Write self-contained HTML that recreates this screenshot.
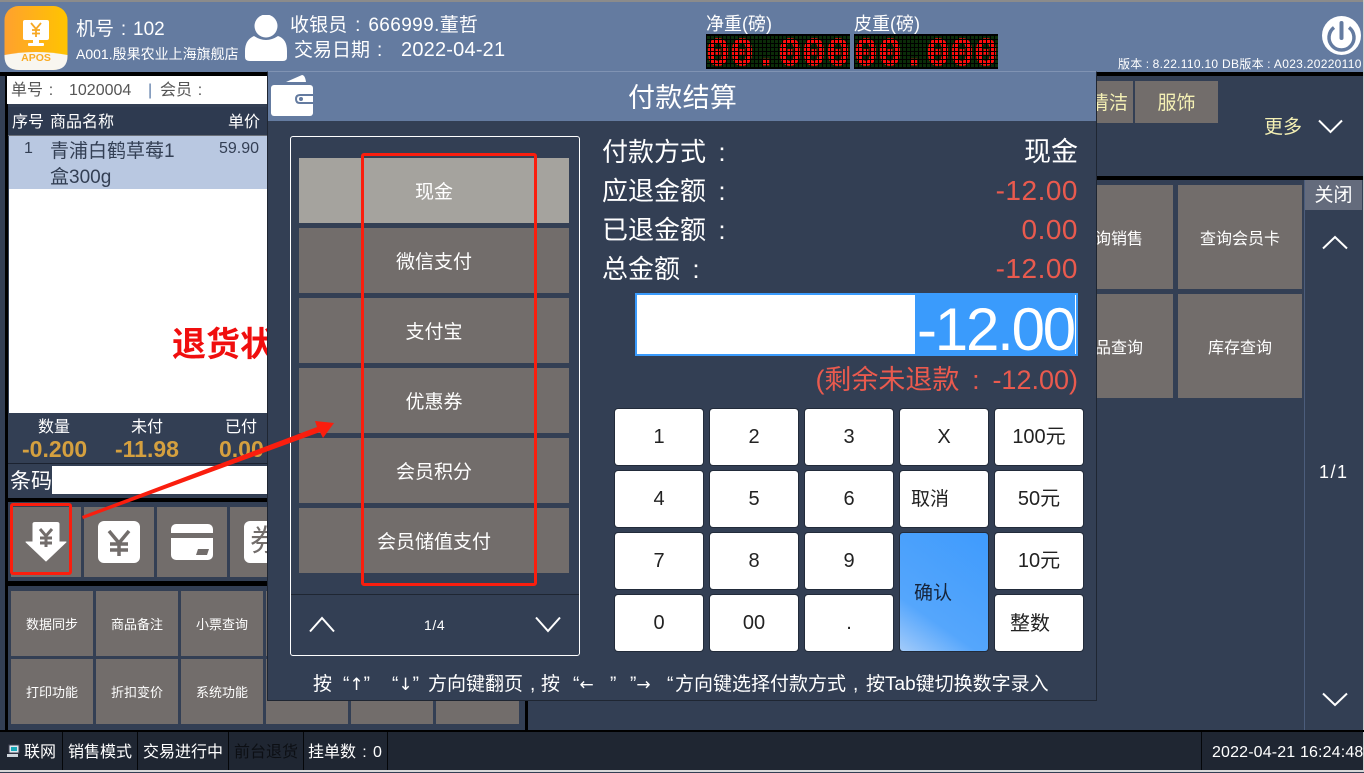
<!DOCTYPE html>
<html lang="zh"><head><meta charset="utf-8"><title>付款结算</title>
<style>
*{box-sizing:border-box}
html,body{margin:0;padding:0}
body{width:1364px;height:772px;position:relative;overflow:hidden;background:#333f54;font-family:"Liberation Sans","Noto Sans CJK SC",sans-serif;color:#fff}
.a{position:absolute}
.t{position:absolute;white-space:nowrap;line-height:1}
.b{position:absolute;display:flex;align-items:center;justify-content:center;background:#726d6b;color:#fff;white-space:nowrap;line-height:1}
.f{font-size:13px;padding-top:2px}
.p{font-size:19px;left:299px;width:270px;height:65px;padding-top:4px}
.q{font-size:16px;padding-top:5px}
.k{position:absolute;display:flex;align-items:center;justify-content:center;width:88px;height:56px;line-height:56px;background:#fff;color:#222;border-radius:3px;font-size:20px;white-space:nowrap;box-shadow:0 0 0 1px #222b3a}
.l{font-size:26px;left:602px;color:#fff}
.r{font-size:28px;right:286px;color:#ea5a4e;letter-spacing:.5px}
.s{position:absolute;top:732px;height:38px;line-height:41px;font-size:16px;white-space:nowrap}
.v{position:absolute;top:732px;width:1px;height:38px;background:#05070a}
.c{display:inline-block;text-align:center}
.h{position:absolute;top:675px;font-size:19px;line-height:1;white-space:nowrap}
.h i{font-style:normal;font-family:"DejaVu Sans",sans-serif;font-size:17px}
svg{position:absolute;display:block}
</style></head><body>
<!-- header -->
<div class="a" style="left:0;top:0;width:1364px;height:72px;background:#647ba0"></div>
<div class="a" style="left:0;top:0;width:1364px;height:2px;background:#8b8b8b"></div>
<div class="a" style="left:0;top:72px;width:1364px;height:4px;background:#000"></div>
<svg style="left:4px;top:6px" width="64" height="64" viewBox="0 0 64 64"><defs><linearGradient id="og" x1="0" x2="1"><stop offset="0" stop-color="#ffa12e"/><stop offset="1" stop-color="#ffc400"/></linearGradient></defs>
<rect x="0.5" width="63" height="64" rx="14" fill="url(#og)"/><path d="M.5 49Q32 43 63.500 49V50Q63.500 64 49 64H15Q.5 64 .5 50Z" fill="#f8f6f0"/>
<rect x="19" y="14" width="26" height="20" rx="2" fill="#fff"/><rect x="29" y="34" width="6" height="3" fill="#fff"/><rect x="24" y="37" width="16" height="3" rx="1" fill="#fff"/>
<path d="M27 17l5 6 5-6M32 23v8M28 24h8M28 27.500h8" stroke="#f7a823" stroke-width="1.800" fill="none"/>
<text x="32" y="55" text-anchor="middle" font-family="Liberation Sans" font-weight="700" font-size="10.500" fill="#f9ab23">APOS</text></svg>
<div class="t" style="left:76px;top:20px;font-size:19px">机号<span class="c" style="width:19px">:</span>102</div>
<div class="t" style="left:76px;top:47px;font-size:14px">A001.殷果农业上海旗舰店</div>
<svg style="left:245px;top:15px" width="43" height="46" viewBox="0 0 43 46"><circle cx="21" cy="11" r="11.500" fill="#fff"/><path d="M9 21Q21 29 33 21Q42 24 42 36V42Q42 46 38 46H5Q0 46 0 42V36Q0 25 9 21Z" fill="#fff"/></svg>
<div class="t" style="left:290px;top:16px;font-size:19px;letter-spacing:.1px">收银员<span class="c" style="width:21px">:</span><span style="letter-spacing:.4px">666999.</span>董哲</div>
<div class="t" style="left:294px;top:40px;font-size:19px">交易日期<span class="c" style="width:31px;text-align:left;padding-left:7px">:</span><span style="font-size:20px;letter-spacing:.2px">2022-04-21</span></div>
<div class="t" style="left:706px;top:15px;font-size:18px">净重(磅)</div>
<div class="t" style="left:854px;top:15px;font-size:18px">皮重(磅)</div>
<svg style="left:706px;top:34px" width="292" height="35" viewBox="0 0 292 35"><defs>
<pattern id="g" width="4" height="4" patternUnits="userSpaceOnUse" x="1" y="2"><rect width="3" height="3" fill="#0b2c08"/></pattern>
<pattern id="w" width="4" height="4" patternUnits="userSpaceOnUse" x="1" y="2"><rect width="3" height="3" fill="#fff"/></pattern>
<mask id="m"><rect width="292" height="35" fill="url(#w)"/></mask></defs>
<rect width="144" height="35" fill="#000"/><rect x="148" width="144" height="35" fill="#000"/>
<rect x="1" y="2" width="143" height="31" fill="url(#g)"/><rect x="149" y="2" width="143" height="31" fill="url(#g)"/>
<g mask="url(#m)"><text x="0" y="31" font-family="Liberation Mono" font-weight="700" font-size="40" fill="#ff0c0c" stroke="#ff0c0c" stroke-width=".7">00.000</text><text x="148" y="31" font-family="Liberation Mono" font-weight="700" font-size="40" fill="#ff0c0c" stroke="#ff0c0c" stroke-width=".7">00.000</text></g></svg>
<svg style="left:1322px;top:16px" width="39" height="39" viewBox="0 0 39 39"><circle cx="19.500" cy="19.500" r="19.500" fill="#fff"/><path d="M12 11.500A12.500 12.500 0 1 0 27 11.500" stroke="#647ba0" stroke-width="3.500" fill="none"/><path d="M19.500 7V22" stroke="#647ba0" stroke-width="4" stroke-linecap="round"/></svg>
<div class="t" style="left:1118px;top:58px;width:245px;overflow:hidden;font-size:12px;letter-spacing:.3px">版本<span class="c" style="width:10px">:</span>8.22.110.10 DB版本<span class="c" style="width:10px">:</span>A023.20220110</div>

<!-- left panel -->
<div class="a" style="left:5px;top:76px;width:3px;height:654px;background:#000"></div>
<div class="a" style="left:7px;top:76px;width:270px;height:28px;background:#fff"></div>
<div class="t" style="left:11px;top:83px;font-size:16px;color:#555">单号<span class="c" style="width:16px">:</span></div>
<div class="t" style="left:69px;top:83px;font-size:16px;color:#555">1020004</div>
<div class="t" style="left:148px;top:83px;font-size:16px;color:#5c7ba8">|</div>
<div class="t" style="left:160px;top:83px;font-size:16px;color:#555">会员<span class="c" style="width:16px">:</span></div>
<div class="a" style="left:8px;top:107px;width:270px;height:28px;background:#2e3a50"></div>
<div class="a" style="left:8px;top:135px;width:270px;height:1px;background:#6a6f78"></div>
<div class="t" style="left:12px;top:115px;font-size:16px">序号</div>
<div class="t" style="left:50px;top:115px;font-size:16px">商品名称</div>
<div class="t" style="left:228px;top:115px;font-size:16px">单价</div>
<div class="a" style="left:9px;top:136px;width:270px;height:53px;background:#b9c8e1"></div>
<div class="a" style="left:9px;top:189px;width:270px;height:224px;background:#fff"></div>
<div class="t" style="left:24px;top:141px;font-size:16px;color:#333f54">1</div>
<div class="t" style="left:50px;top:142px;font-size:19px;color:#333f54">青浦白鹤草莓1</div>
<div class="t" style="left:50px;top:168px;font-size:19px;color:#333f54">盒300g</div>
<div class="t" style="left:219px;top:141px;font-size:16px;color:#333f54">59.90</div>
<div class="t" style="left:172px;top:328px;font-size:34px;font-weight:700;color:#f00e0e">退货状态</div>
<div class="t" style="left:38px;top:420px;font-size:16px">数量</div>
<div class="t" style="left:131px;top:420px;font-size:16px">未付</div>
<div class="t" style="left:225px;top:420px;font-size:16px">已付</div>
<div class="t" style="left:22px;top:438px;font-size:23px;font-weight:700;color:#d5a03f">-0.200</div>
<div class="t" style="left:115px;top:438px;font-size:23px;font-weight:700;color:#d5a03f">-11.98</div>
<div class="t" style="left:219px;top:438px;font-size:23px;font-weight:700;color:#d5a03f">0.00</div>
<div class="a" style="left:8px;top:463px;width:270px;height:1px;background:#1b2230"></div>
<div class="t" style="left:10px;top:471px;font-size:21px">条码</div>
<div class="a" style="left:52px;top:466px;width:220px;height:28px;background:#fff"></div>
<div class="a" style="left:6px;top:498px;width:270px;height:4px;background:#000"></div>
<div class="b" style="left:11px;top:507px;width:70px;height:70px"></div>
<div class="b" style="left:84px;top:507px;width:70px;height:70px"></div>
<div class="b" style="left:157px;top:507px;width:70px;height:70px"></div>
<div class="b" style="left:230px;top:507px;width:50px;height:70px"></div>
<svg style="left:25px;top:522px" width="42" height="40" viewBox="0 0 42 40"><path d="M8 2Q8 .5 10 .5H32Q34 .5 34 2V20H41L21 39L1 20H8Z" fill="#fff" stroke="#fff" stroke-linejoin="round"/><path d="M15 7l6 7 6-7M21 14v11M15 16h12M15 21h12" stroke="#726d6b" stroke-width="3" fill="none"/></svg>
<svg style="left:98px;top:521px" width="42" height="42" viewBox="0 0 42 42"><rect width="42" height="42" rx="6" fill="#fff"/><path d="M11 10l10 12 10-12M21 22v13M12 23h18M12 29h18" stroke="#726d6b" stroke-width="3.500" fill="none"/></svg>
<svg style="left:171px;top:524px" width="42" height="36" viewBox="0 0 42 36"><rect width="42" height="36" rx="5" fill="#fff"/><rect y="9" width="42" height="5" fill="#726d6b"/><path d="M27 25H38L36 31H25Z" fill="#726d6b"/></svg>
<div class="b" style="left:244px;top:521px;width:42px;height:42px;background:#fff;border-radius:6px;color:#726d6b;font-size:30px">券</div>
<div class="a" style="left:6px;top:581px;width:520px;height:5px;background:#000"></div>
<div class="b f" style="left:11px;top:591px;width:82px;height:65px">数据同步</div>
<div class="b f" style="left:96px;top:591px;width:82px;height:65px">商品备注</div>
<div class="b f" style="left:181px;top:591px;width:82px;height:65px">小票查询</div>
<div class="b f" style="left:266px;top:591px;width:82px;height:65px"></div>
<div class="b f" style="left:11px;top:659px;width:82px;height:65px">打印功能</div>
<div class="b f" style="left:96px;top:659px;width:82px;height:65px">折扣变价</div>
<div class="b f" style="left:181px;top:659px;width:82px;height:65px">系统功能</div>
<div class="b f" style="left:266px;top:659px;width:82px;height:65px"></div>
<div class="b f" style="left:351px;top:659px;width:82px;height:65px"></div>
<div class="b f" style="left:436px;top:659px;width:83px;height:65px"></div>
<div class="a" style="left:525px;top:76px;width:3px;height:654px;background:#000"></div>

<!-- right area -->
<div class="b" style="left:1050px;top:81px;width:83px;height:42px;font-size:19px;color:#f4f0b4;justify-content:flex-end;padding:3px 5px 0 0">清洁</div>
<div class="b" style="left:1135px;top:81px;width:83px;height:42px;font-size:19px;color:#f4f0b4;padding-top:3px">服饰</div>
<div class="t" style="left:1264px;top:118px;font-size:19px;color:#f4f0b4">更多</div>
<svg style="left:1318px;top:119px" width="25" height="15" viewBox="0 0 25 15"><path d="M1 1.500L12.500 13 24 1.500" stroke="#fff" stroke-width="2" fill="none"/></svg>
<div class="a" style="left:528px;top:176px;width:836px;height:4px;background:#000"></div>
<div class="b q" style="left:1050px;top:185px;width:123px;height:104px;justify-content:flex-end;padding-right:30px">询销售</div>
<div class="b q" style="left:1178px;top:185px;width:124px;height:104px">查询会员卡</div>
<div class="b q" style="left:1050px;top:294px;width:123px;height:104px;justify-content:flex-end;padding-right:30px">品查询</div>
<div class="b q" style="left:1178px;top:294px;width:124px;height:104px">库存查询</div>
<div class="a" style="left:1304px;top:180px;width:1px;height:550px;background:#4c5d7c"></div>
<div class="b" style="left:1305px;top:180px;width:57px;height:30px;background:#646b7c;font-size:19px">关闭</div>
<svg style="left:1322px;top:235px" width="26" height="15" viewBox="0 0 26 15"><path d="M1 13.500L13 2 25 13.500" stroke="#fff" stroke-width="2" fill="none"/></svg>
<div class="t" style="left:1319px;top:463px;font-size:18px;letter-spacing:1.500px">1/1</div>
<svg style="left:1322px;top:692px" width="26" height="15" viewBox="0 0 26 15"><path d="M1 1.500L13 13 25 1.500" stroke="#fff" stroke-width="2" fill="none"/></svg>
<div class="a" style="left:1363px;top:0;width:1px;height:772px;background:#cfcfcf"></div>

<!-- status bar -->
<div class="a" style="left:0;top:730px;width:1364px;height:2px;background:#000"></div>
<div class="a" style="left:0;top:732px;width:1363px;height:38px;background:#1f2632"></div>
<div class="a" style="left:0;top:770px;width:1364px;height:2px;background:#d8d8d8"></div>
<svg style="left:6px;top:744px" width="14" height="14" viewBox="0 0 14 14"><rect x="3" y="1" width="10" height="8" fill="#dfe7ef" stroke="#445" /><rect x="5" y="3" width="6" height="4" fill="#17a8b8"/><rect x="1" y="10" width="11" height="3" fill="#cfd6dd"/></svg>
<div class="s" style="left:24px">联网</div><div class="v" style="left:62px"></div>
<div class="s" style="left:68px">销售模式</div><div class="v" style="left:137px"></div>
<div class="s" style="left:143px">交易进行中</div><div class="v" style="left:228px"></div>
<div class="s" style="left:234px;color:#0c0f14">前台退货</div><div class="v" style="left:303px"></div>
<div class="s" style="left:308px">挂单数<span class="c" style="width:17px">:</span>0</div><div class="v" style="left:387px"></div>
<div class="v" style="left:1201px"></div>
<div class="s" style="left:1212px;width:151px;overflow:hidden;letter-spacing:.15px">2022-04-21 16:24:48</div>

<!-- modal -->
<div class="a" style="left:267px;top:71px;width:830px;height:630px;background:#333f54;border:1px solid #1f2632;border-top:1px solid #8093b3"></div>
<div class="a" style="left:268px;top:72px;width:828px;height:49px;background:#647ba0"></div>
<svg style="left:270px;top:75px" width="44" height="42" viewBox="0 0 44 42"><path d="M16 7L32 0Q35 0 36 7Z" fill="#fff"/><rect x="1" y="10" width="42" height="31" rx="3" fill="#fff"/><path d="M43 19H30Q25 19 25 24Q25 29 30 29H43" fill="#647ba0"/><path d="M43 21H30Q27 21 27 24Q27 27 30 27H43Z" fill="#fff"/><circle cx="31" cy="24" r="2" fill="#647ba0"/></svg>
<div class="t" style="left:628px;top:85px;font-size:27px;letter-spacing:.3px">付款结算</div>
<div class="a" style="left:290px;top:136px;width:290px;height:520px;border:1px solid #fff;border-radius:3px"></div>
<div class="b p" style="top:158px;background:#a5a39e">现金</div>
<div class="b p" style="top:228px">微信支付</div>
<div class="b p" style="top:298px">支付宝</div>
<div class="b p" style="top:368px">优惠券</div>
<div class="b p" style="top:438px">会员积分</div>
<div class="b p" style="top:508px">会员储值支付</div>
<div class="a" style="left:291px;top:594px;width:288px;height:1px;background:#1f2632"></div>
<svg style="left:309px;top:616px" width="26" height="17" viewBox="0 0 26 17"><path d="M1 15.500L13 2 25 15.500" stroke="#fff" stroke-width="2" fill="none"/></svg>
<div class="t" style="left:424px;top:618px;font-size:14px;letter-spacing:.6px">1/4</div>
<svg style="left:535px;top:616px" width="26" height="17" viewBox="0 0 26 17"><path d="M1 1.500L13 15 25 1.500" stroke="#fff" stroke-width="2" fill="none"/></svg>

<div class="t l" style="top:139px">付款方式<span class="c" style="width:32px">:</span></div><div class="t" style="right:286px;top:139px;font-size:27px">现金</div>
<div class="t l" style="top:178px">应退金额<span class="c" style="width:32px">:</span></div><div class="t r" style="top:177px">-12.00</div>
<div class="t l" style="top:217px">已退金额<span class="c" style="width:32px">:</span></div><div class="t r" style="top:216px">0.00</div>
<div class="t l" style="top:256px">总金额<span class="c" style="width:32px">:</span></div><div class="t r" style="top:255px">-12.00</div>
<div class="a" style="left:635px;top:293px;width:443px;height:63px;background:#fff;border:2px solid #3a9bfc"></div>
<div class="a" style="left:915px;top:295px;width:162px;height:59px;background:#3a9bfc"></div>
<div class="t" style="left:917px;top:295px;height:59px;line-height:70px;font-size:60px;letter-spacing:-2.200px">-12.00</div>
<div class="a" style="left:1075px;top:295px;width:1px;height:59px;background:#fff"></div>
<div class="t" style="right:286px;top:367px;font-size:27px;color:#ea5a4e">(剩余未退款<span class="c" style="width:33px">:</span>-12.00)</div>

<div class="k" style="left:615px;top:409px">1</div><div class="k" style="left:710px;top:409px">2</div><div class="k" style="left:805px;top:409px">3</div><div class="k" style="left:900px;top:409px">X</div><div class="k" style="left:995px;top:409px">100元</div>
<div class="k" style="left:615px;top:471px">4</div><div class="k" style="left:710px;top:471px">5</div><div class="k" style="left:805px;top:471px">6</div><div class="k" style="left:900px;top:471px;justify-content:flex-start;padding:1px 0 0 11px;font-size:19px">取消</div><div class="k" style="left:995px;top:471px">50元</div>
<div class="k" style="left:615px;top:533px">7</div><div class="k" style="left:710px;top:533px">8</div><div class="k" style="left:805px;top:533px">9</div>
<div class="k" style="left:900px;top:533px;height:118px;line-height:118px;background:linear-gradient(215deg,#3f9bfd 0%,#55a6fc 70%,#a3cbfa 100%);justify-content:flex-start;padding:3px 0 0 14px;font-size:19px;color:#16243a">确认</div>
<div class="k" style="left:995px;top:533px">10元</div>
<div class="k" style="left:615px;top:595px">0</div><div class="k" style="left:710px;top:595px">00</div><div class="k" style="left:805px;top:595px">.</div><div class="k" style="left:995px;top:595px;justify-content:flex-start;padding:2px 0 0 15px">整数</div>

<div class="h" style="left:313px">按</div>
<div class="h" style="left:343px">“<i>↑</i>”</div>
<div class="h" style="left:392px">“<i>↓</i>”</div>
<div class="h" style="left:428px">方向键翻页</div>
<div class="h" style="left:530px">,</div>
<div class="h" style="left:541px">按</div>
<div class="h" style="left:573px">“<i>←</i></div>
<div class="h" style="left:610px">”</div>
<div class="h" style="left:630px">”<i>→</i></div>
<div class="h" style="left:667px">“</div>
<div class="h" style="left:675px">方向键选择付款方式</div>
<div class="h" style="left:853px">,</div>
<div class="h" style="left:866px">按Tab键切换数字录入</div>

<!-- annotations -->
<div class="a" style="left:361px;top:153px;width:176px;height:433px;border:3px solid #fa1e0e;border-radius:3px"></div>
<div class="a" style="left:10px;top:503px;width:62px;height:72px;border:3px solid #fa1e0e;border-radius:3px"></div>
<svg style="left:0;top:0" width="1364" height="772" viewBox="0 0 1364 772"><path d="M82 516L317 427L315 421L334 423L323 438L320 432L83 519Z" fill="#fa1e0e"/></svg>
</body></html>
